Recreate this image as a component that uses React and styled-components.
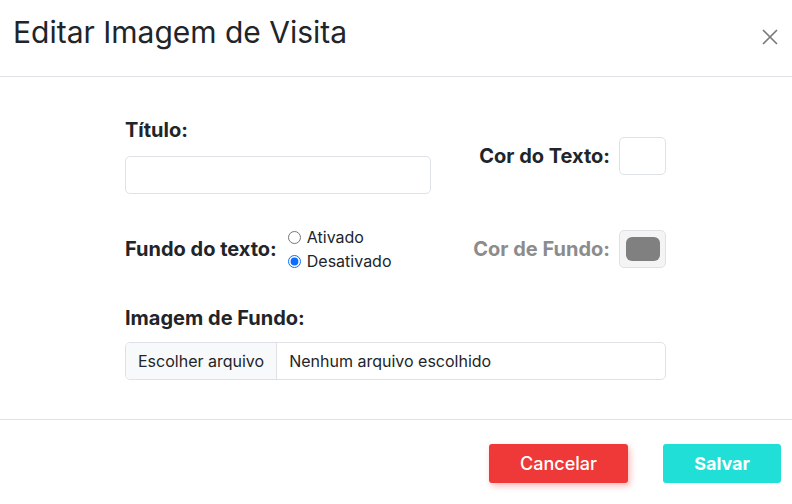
import styled, { createGlobalStyle } from "styled-components";

const GlobalStyle = createGlobalStyle`
  html, body {
    margin: 0;
    padding: 0;
    background: #ffffff;
    font-family: "Inter", "Liberation Sans", sans-serif;
    color: #212529;
  }
`

const Modal = styled.div`
  width: 792px;
  height: 504px;
  display: flex;
  flex-direction: column;
  background: #ffffff;
`

const Header = styled.div`
  height: 77px;
  display: flex;
  align-items: flex-start;
  justify-content: space-between;
  padding: 14px 14px 0 13px;
  border-bottom: 1px solid #dee2e6;
  box-sizing: border-box;
`

const Title = styled.h1`
  margin: 0;
  font-size: 30px;
  line-height: 36px;
  font-weight: 400;
  color: #212529;
`

const Close = styled.button`
  border: none;
  background: none;
  padding: 0;
  margin-top: 15px;
  width: 16px;
  height: 16px;
  display: flex;
  cursor: pointer;
`

const Body = styled.div`
  flex: 1;
  display: flex;
  flex-direction: column;
  padding: 41px 0 0 125px;
  border-bottom: 1px solid #dee2e6;
`

const Form = styled.div`
  width: 541px;
  display: flex;
  flex-direction: column;
`

const Row = styled.div`
  display: flex;
  align-items: center;
  justify-content: space-between;
  margin-bottom: ${props => props.gap || 0}px;
`

const Field = styled.div`
  display: flex;
  flex-direction: column;
  gap: ${props => props.gap || 14}px;
`

const Label = styled.label`
  font-size: 20px;
  font-weight: 700;
  line-height: 24px;
  white-space: nowrap;
  color: ${props => props.muted ? "#8c8c8c" : "#212529"};
`

const TextInput = styled.input`
  width: 306px;
  height: 38px;
  box-sizing: border-box;
  border: 1px solid #dee2e6;
  border-radius: 5px;
  outline: none;
`

const Inline = styled.div`
  display: flex;
  align-items: center;
  gap: ${props => props.gap || 9}px;
`

const Swatch = styled.div`
  width: 47px;
  height: 38px;
  box-sizing: border-box;
  border: 1px solid #dee2e6;
  border-radius: 5px;
  background: ${props => props.disabled ? "#f4f4f4" : "#ffffff"};
  display: flex;
  align-items: center;
  justify-content: center;
`

const SwatchFill = styled.div`
  width: 34px;
  height: 24px;
  border-radius: 6px;
  background: #808080;
`

const Radios = styled.div`
  display: flex;
  flex-direction: column;
  gap: 4px;
`

const RadioLabel = styled.label`
  display: flex;
  align-items: center;
  gap: 6px;
  font-size: 16px;
  line-height: 20px;
  color: #212529;
`

const Radio = styled.input`
  width: 13px;
  height: 13px;
  margin: 0;
  accent-color: #0d6efd;
`

const FileBox = styled.div`
  height: 38px;
  display: flex;
  align-items: stretch;
  box-sizing: border-box;
  border: 1px solid #dee2e6;
  border-radius: 5px;
  overflow: hidden;
  font-size: 16px;
`

const FileButton = styled.div`
  display: flex;
  align-items: center;
  padding: 0 12px;
  background: #f8f9fa;
  border-right: 1px solid #dee2e6;
  color: #212529;
`

const FileName = styled.div`
  display: flex;
  align-items: center;
  padding: 0 12px;
  color: #212529;
`

const Footer = styled.div`
  height: 84px;
  display: flex;
  align-items: flex-start;
  justify-content: flex-end;
  gap: 35px;
  padding: 24px 11px 0 0;
  box-sizing: border-box;
`

const Button = styled.button`
  width: ${props => props.w}px;
  height: 39px;
  border: none;
  border-radius: 3px;
  color: #ffffff;
  font-family: "Inter", "Liberation Sans", sans-serif;
  font-size: 18px;
  font-weight: ${props => props.strong ? 700 : 500};
  background: ${props => props.bg};
  box-shadow: ${props => props.shadow ? "2px 3px 6px rgba(239, 56, 56, 0.35)" : "none"};
  cursor: pointer;
`

export default function App() {
  return (
    <Modal>
      <GlobalStyle />

      <Header>
        <Title>Editar Imagem de Visita</Title>
        <Close aria-label="Fechar">
          <svg width="16" height="16" viewBox="0 0 16 16">
            <path d="M1 1 L15 15 M15 1 L1 15" stroke="#7a7a7a" strokeWidth="1.7" fill="none" />
          </svg>
        </Close>
      </Header>

      <Body>
        <Form>
          <Row gap={33}>
            <Field>
              <Label>Título:</Label>
              <TextInput type="text" />
            </Field>
            <Inline>
              <Label>Cor do Texto:</Label>
              <Swatch />
            </Inline>
          </Row>

          <Row gap={35}>
            <Inline gap={11}>
              <Label>Fundo do texto:</Label>
              <Radios>
                <RadioLabel><Radio type="radio" name="fundo" />Ativado</RadioLabel>
                <RadioLabel><Radio type="radio" name="fundo" defaultChecked />Desativado</RadioLabel>
              </Radios>
            </Inline>
            <Inline>
              <Label muted>Cor de Fundo:</Label>
              <Swatch disabled>
                <SwatchFill />
              </Swatch>
            </Inline>
          </Row>

          <Field gap={12}>
            <Label>Imagem de Fundo:</Label>
            <FileBox>
              <FileButton>Escolher arquivo</FileButton>
              <FileName>Nenhum arquivo escolhido</FileName>
            </FileBox>
          </Field>
        </Form>
      </Body>

      <Footer>
        <Button w={139} bg="#ef3838" shadow>Cancelar</Button>
        <Button w={118} bg="#1fdfd7" strong>Salvar</Button>
      </Footer>
    </Modal>
  );
}
